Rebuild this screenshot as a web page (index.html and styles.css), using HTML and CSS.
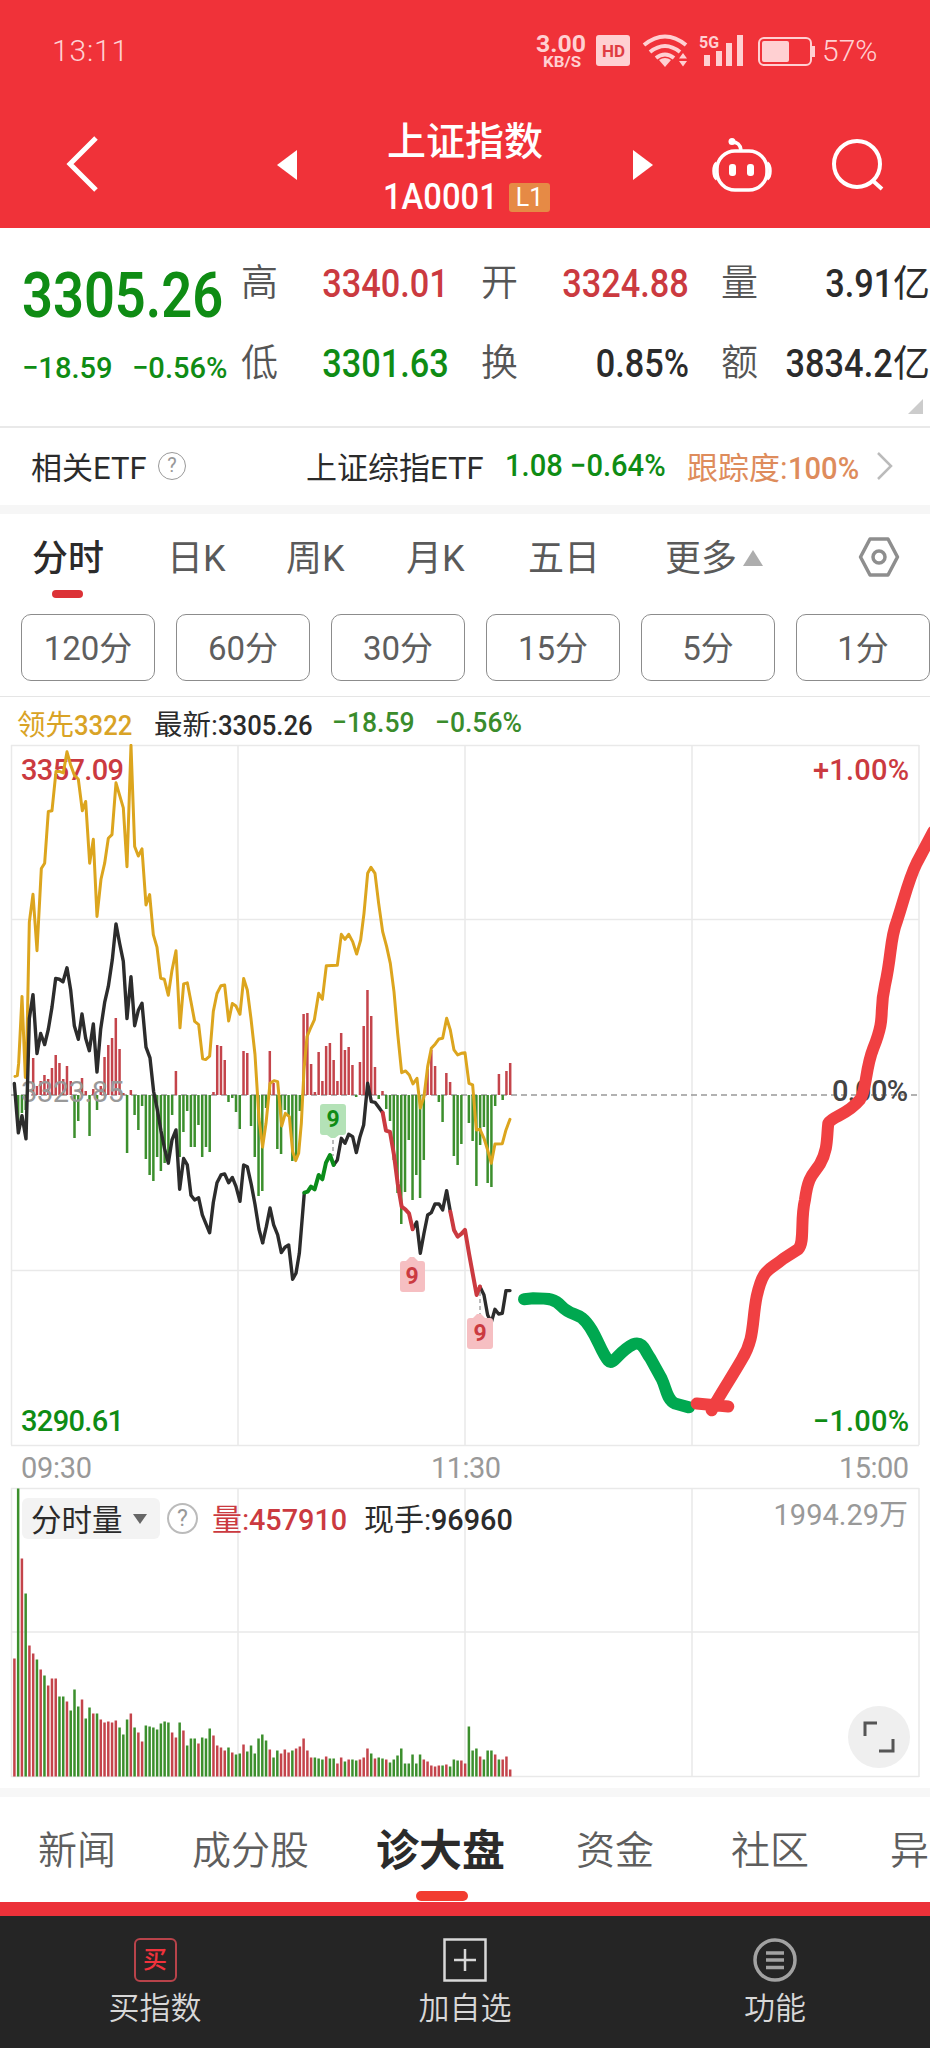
FILE: index.html
```
<!DOCTYPE html>
<html lang="zh-CN">
<head>
  <meta charset="UTF-8">
  <meta name="viewport" content="width=device-width, initial-scale=1.0">
  <title>上证指数</title>
  <link rel="stylesheet" href="styles.css">
</head>
<body>
  <div class="header">
    <div class="status">
      <span class="time">13:11</span>
      <svg class="status-icons" width="285" height="40" viewBox="535 30 285 40" fill="#ffd0d2">
        <text x="536" y="52" font-size="24" font-weight="700" textLength="50" lengthAdjust="spacingAndGlyphs">3.00</text>
        <text x="543" y="66.500" font-size="15" font-weight="700" textLength="38" lengthAdjust="spacingAndGlyphs">KB/S</text>
        <rect x="596" y="35" width="34" height="31" rx="3"/>
        <text x="602" y="56.5" font-size="17" font-weight="700" fill="#e03c42" textLength="23" lengthAdjust="spacingAndGlyphs">HD</text>
        <g fill="none" stroke="#ffd0d2" stroke-width="4">
          <path d="M644 45 Q665 28 686 45"/>
          <path d="M650 52 Q665 40 680 52"/>
          <path d="M656 58 Q665 51 674 58"/>
        </g>
        <path d="M659 60 Q665 56 671 60 L665 67Z"/>
        <path d="M679 58.500 L683 53 L687 58.500Z M679 61 L687 61 L683 66.500Z"/>
        <text x="699" y="48" font-size="17" font-weight="700" textLength="20" lengthAdjust="spacingAndGlyphs">5G</text>
        <rect x="704" y="55" width="6" height="11"/>
        <rect x="716" y="51" width="6" height="15"/>
        <rect x="726" y="43" width="6" height="23"/>
        <rect x="737" y="35" width="6" height="31"/>
        <rect x="759" y="38" width="52" height="27" rx="5" fill="none" stroke="#ffd0d2" stroke-width="2"/>
        <rect x="762" y="41" width="27" height="21" rx="2"/>
        <rect x="812" y="46" width="3" height="11"/>
      </svg>
      <span class="battery">57%</span>
    </div>
    <div class="nav">
      <svg class="back" width="34" height="58" viewBox="0 0 34 58" fill="none" stroke="#fff" stroke-width="5"><path d="M31 3 L5 29 L31 55"/></svg>
      <svg class="prev" width="20" height="30" viewBox="0 0 20 30" fill="#fff"><path d="M20 0 V30 L0 15Z"/></svg>
      <div class="title">
        <h1>上证指数</h1>
        <p><span class="code">1A0001</span><i class="level">L1</i></p>
      </div>
      <svg class="next" width="20" height="30" viewBox="0 0 20 30" fill="#fff"><path d="M0 0 V30 L20 15Z"/></svg>
      <svg class="robot" width="60" height="56" viewBox="0 0 60 56" fill="none" stroke="#fff" stroke-width="3.500">
        <rect x="5" y="14" width="50" height="39" rx="18"/>
        <path d="M5 26 Q2 28 2 34 Q2 40 5 42 M55 26 Q58 28 58 34 Q58 40 55 42"/>
        <path d="M20 5 Q28 5 29 13"/>
        <circle cx="20" cy="4.500" r="3.500" fill="#fff" stroke="none"/>
        <rect x="17" y="27" width="7" height="12" rx="3" fill="#fff" stroke="none"/>
        <rect x="35" y="27" width="7" height="12" rx="3" fill="#fff" stroke="none"/>
      </svg>
      <svg class="search" width="54" height="54" viewBox="0 0 54 54" fill="none" stroke="#fff" stroke-width="4">
        <circle cx="26" cy="26" r="23"/>
        <path d="M41 42 L51 51"/>
      </svg>
    </div>
  </div>

  <div class="quote">
    <div class="price">
      <strong class="green"><span class="num">3305.26</span></strong>
      <p class="green"><span class="num">−18.59</span><span class="num">−0.56%</span></p>
    </div>
    <dl class="stats">
      <dt>高</dt><dd class="red"><span class="num">3340.01</span></dd>
      <dt>开</dt><dd class="red"><span class="num">3324.88</span></dd>
      <dt>量</dt><dd><span class="num">3.91</span>亿</dd>
      <dt>低</dt><dd class="green"><span class="num">3301.63</span></dd>
      <dt>换</dt><dd><span class="num">0.85%</span></dd>
      <dt>额</dt><dd><span class="num">3834.2</span>亿</dd>
    </dl>
    <i class="corner"></i>
  </div>

  <div class="etf">
    <span>相关ETF</span>
    <i class="help">?</i>
    <span>上证综指ETF</span>
    <span class="green num">1.08</span>
    <span class="green num">−0.64%</span>
    <span class="orange">跟踪度:<b class="num">100%</b></span>
    <svg width="16" height="28" viewBox="0 0 16 28" fill="none" stroke="#bbb" stroke-width="2.500"><path d="M1 1 L14 14 L1 27"/></svg>
  </div>

  <div class="tabs">
    <span class="active">分时</span>
    <span>日K</span>
    <span>周K</span>
    <span>月K</span>
    <span>五日</span>
    <span>更多<i class="up"></i></span>
    <svg width="42" height="40" viewBox="0 0 42 40" fill="none" stroke="#8e8e8e" stroke-width="3.500">
      <path d="M12 2 H30 L39.500 20 L30 38 H12 L2.500 20Z" stroke-linejoin="round"/>
      <circle cx="21" cy="20" r="6"/>
    </svg>
  </div>
  <div class="periods">
    <span>120分</span><span>60分</span><span>30分</span><span>15分</span><span>5分</span><span>1分</span>
  </div>

  <div class="legend">
    <span class="yellow">领先<b class="num">3322</b></span>
    <span>最新:<b class="num">3305.26</b></span>
    <span class="green num">−18.59</span>
    <span class="green num">−0.56%</span>
  </div>

  <!-- 分时走势 + 分时量 -->
  <div class="chart">
    <svg width="930" height="1040" viewBox="0 744 930 1040">
      <g class="grid">
        <path d="M11 745.500 H919 M11 919.500 H919 M11 1270.500 H919 M11 1445.500 H919"/>
        <path d="M11.500 745 V1445 M238 745 V1445 M465 745 V1445 M692 745 V1445 M919 745 V1445"/>
        <path d="M11 1488.500 H919 M11 1632 H919 M11 1776.500 H919"/>
        <path d="M11.500 1488 V1777 M238 1488 V1777 M465 1488 V1777 M692 1488 V1777 M919 1488 V1777"/>
      </g>
      <path class="zero" d="M11 1095 H919"/>
      <g id="power"></g>
      <g id="volume"></g>

      <g class="axis">
        <text class="t-red" x="21" y="780" textLength="103">3357.09</text>
        <text class="t-red" x="813" y="780" textLength="96">+1.00%</text>
        <text class="t-gray" x="21" y="1102" font-size="30" textLength="103">3323.85</text>
        <text class="t-dark" x="832" y="1101" textLength="76">0.00%</text>
        <text class="t-green" x="21" y="1430.500" textLength="103">3290.61</text>
        <text class="t-green" x="813" y="1430.500" textLength="96">−1.00%</text>
        <text class="t-gray" x="21" y="1478" textLength="71">09:30</text>
        <text class="t-gray" x="431" y="1478" textLength="70">11:30</text>
        <text class="t-gray" x="839" y="1478" textLength="70">15:00</text>
      </g>

      <g class="line yellow-line">
        <polyline transform="translate(0 740) scale(.3333 .3571)" points="45,942 52,940 56,905 66,718 76,945 80,880 88,510 99,432 111,590 124,360 134,345 145,200 156,198 168,88 178,88 190,92 201,33 212,70 223,98 235,110 247,198 257,172 269,345 280,278 291,494 303,390 314,345 325,275 336,265 348,120 359,155 370,190 381,355 393,15 404,298 415,325 426,305 438,462 449,433 460,545 471,580 482,667 493,670 505,715 516,645 528,590 540,806 551,683 562,680 573,733 584,788 596,797 608,893 617,895 629,885 640,760 651,710 663,688 674,686 686,787 697,738 708,745 720,768 731,668 742,700 753,780 765,880 777,1060 788,1140"/>
        <polyline transform="translate(260 840) scale(.3333)" points="8,920 18,850 30,730 42,722 53,725 65,858 76,820 88,830 98,935 107,962 116,940 124,850 132,690 141,590 150,568 163,540 176,460 187,478 199,377 232,376 244,283 255,298 266,283 278,305 290,342 302,300 312,220 323,100 333,82 345,100 356,190 368,275 380,320 391,370 402,455 413,580 425,698 437,693 448,705 459,732 471,715 481,804 492,770 503,680 514,625 526,612 537,597 548,595 560,535 571,570 582,630 593,645 604,640 615,638 627,730 638,735 649,870 660,868 672,895 683,930 694,970 705,912 727,911 738,870 750,838"/>
      </g>
      <g class="line price-line">
        <polyline transform="translate(0 740) scale(.3333 .3571)" points="43,962 55,1100 66,1052 78,1117 88,780 99,713 111,878 122,822 134,853 145,810 156,748 167,668 178,670 189,677 201,638 212,700 223,800 235,838 246,767 257,835 268,870 280,795 291,930 302,810 314,735 325,690 337,615 348,515 359,570 370,620 381,780 393,663 404,800 415,757 426,737 438,860 450,890 461,985 472,1035 483,1095 494,1145 505,1185 516,1120 528,1092 539,1258 551,1172 562,1190 573,1275 584,1288 596,1282 607,1330 618,1355 629,1380 640,1295 651,1240 663,1218 674,1215 686,1240 697,1225 708,1250 720,1292 731,1190 742,1195 754,1245 765,1300 777,1370 788,1408"/>
        <g transform="translate(260 840) scale(.3333)">
          <polyline points="8,1208 19,1160 30,1104 41,1155 53,1185 64,1238 75,1222 86,1215 98,1318 108,1300 118,1240 133,1058"/>
          <polyline points="221,975 232,960 244,895 255,910 266,883 278,890 289,938 300,890 311,855 323,730 334,785 345,787 357,803 368,818"/>
          <polyline points="458,1168 470,1146 481,1240 492,1180 503,1125 514,1118 525,1092 537,1092 548,1110 560,1052 571,1115"/>
          <polyline points="660,1340 672,1365 683,1425 694,1447 705,1408 716,1422 727,1420 738,1352 750,1352"/>
          <polyline class="fall" points="133,1058 143,1055 153,1040 164,1048 176,1005 187,1018 198,968 210,945 221,975"/>
          <polyline class="rise" points="368,818 378,872 390,876 402,945 413,1030 425,1100 436,1108 447,1120 458,1168"/>
          <polyline class="rise" points="571,1115 582,1170 593,1190 604,1182 615,1170 627,1240 638,1300 650,1365 660,1340"/>
        </g>
      </g>

      <!-- 九转标记 -->
      <path d="M333 1140 V1156 M480 1292 V1314" stroke="#777" stroke-dasharray="4 3"/>
      <g class="nine">
        <path class="nine-green" d="M323 1104 H343 Q346 1104 346 1107 V1132 Q346 1135 343 1135 H339 L335 1138 H331 L327 1135 H323 Q320 1135 320 1132 V1107 Q320 1104 323 1104Z"/>
        <text class="t-green" x="333" y="1127">9</text>
        <path class="nine-red" d="M403 1261 H406 L410 1257 H414 L418 1261 H422 Q425 1261 425 1264 V1289 Q425 1292 422 1292 H403 Q400 1292 400 1289 V1264 Q400 1261 403 1261Z"/>
        <text class="t-red" x="412" y="1284">9</text>
        <path class="nine-red" d="M470 1318 H473 L477 1314 H481 L485 1318 H490 Q493 1318 493 1321 V1346 Q493 1349 490 1349 H470 Q467 1349 467 1346 V1321 Q467 1318 470 1318Z"/>
        <text class="t-red" x="480" y="1341">9</text>
      </g>

      <!-- 手绘走势 -->
      <g class="draw" transform="translate(500 800) scale(.3333 .4209)">
        <path stroke="#00a850" d="M72 1186 L100 1184 C150 1184 165 1186 185 1203 S225 1220 245 1230 C285 1255 300 1310 325 1332 C340 1345 355 1310 400 1293 C430 1285 435 1310 450 1325 L485 1375 C500 1400 500 1425 525 1434 L567 1443"/>
        <path stroke="#f04042" d="M590 1434 L685 1441 M635 1450 C650 1425 700 1365 725 1330 C765 1280 755 1240 770 1180 C790 1110 805 1120 850 1090 L895 1067 C915 1050 900 1000 915 950 C925 890 940 890 960 865 C985 830 980 800 985 768 C1000 750 1040 750 1080 712 C1100 690 1095 640 1120 590 C1160 510 1135 510 1155 440 C1175 370 1170 330 1190 290 C1215 230 1225 190 1250 150 L1300 75"/>
      </g>
    </svg>

    <div class="vol-bar">
      <span class="select">分时量<i class="down"></i></span>
      <i class="help">?</i>
      <span class="red">量:<b class="num">457910</b></span>
      <span>现手:<b class="num">96960</b></span>
      <span class="max">1994.29万</span>
    </div>
    <div class="expand">
      <svg width="32" height="32" viewBox="0 0 32 32" fill="none" stroke="#555" stroke-width="3"><path d="M2 15 V2 H14 M30 18 V30 H16"/></svg>
    </div>
  </div>

  <div class="sections">
    <span>新闻</span>
    <span>成分股</span>
    <span class="active">诊大盘</span>
    <span>资金</span>
    <span>社区</span>
    <span>异动</span>
  </div>

  <div class="footer">
    <div>
      <i class="buy">买</i>
      <span>买指数</span>
    </div>
    <div>
      <svg width="44" height="44" viewBox="0 0 44 44" fill="none" stroke="#d8d8d8" stroke-width="2.500"><path d="M1.500 1.500 H42.500 V42.500 H1.500Z M11 22 H33 M22 11 V33"/></svg>
      <span>加自选</span>
    </div>
    <div>
      <svg width="44" height="44" viewBox="0 0 44 44" fill="none" stroke="#a2a2a2" stroke-width="3.500"><circle cx="22" cy="22" r="20"/><path d="M13 15 H31 M13 22 H31 M13 29.500 H31"/></svg>
      <span>功能</span>
    </div>
  </div>
  <script src="chart.js"></script>
</body>
</html>
```

FILE: styles.css
```
*{
  margin:0;
  padding:0;
  box-sizing:border-box;
}
body{
  width:930px;
  height:2048px;
  overflow:hidden;
  background:#fff;
  color:#2b2b2b;
  font-family:Roboto,"Noto Sans CJK SC",sans-serif;
}
i{
  font-style:normal;
}
svg{
  display:block;
}
.num{
  display:inline-block;
  font-weight:500;
  transform:scaleX(.88);
  transform-origin:left;
}
.red{color:#cb3a40;}
.green{color:#0f8c14;}
.orange{color:#de8c5c;}
.yellow{color:#d9a326;}

/* 顶部 */
.header{
  height:228px;
  background:#f03239;
  color:#fff;
}
.status{
  height:102px;
  padding:30px 0 0 52px;
  display:flex;
  color:#ffd0d2;
  font-size:30px;
  font-weight:300;
  line-height:42px;
}
.time{
  width:483px;
  letter-spacing:.8px;
}
.battery{
  padding-left:2px;
}
.nav{
  display:grid;
  grid-template-columns:212px 91px 265px 79px 119px 60px;
  height:126px;
  padding:14px 0 0 65px;
  align-items:center;
}
.nav svg{
  margin-bottom:14px;
}
.nav .back{
  margin-bottom:17px;
}
.title{
  align-self:start;
  padding:2px 0 0 15px;
}
.title h1{
  font-size:39px;
  font-weight:500;
  line-height:48px;
  padding-left:4px;
}
.title p{
  display:flex;
  align-items:center;
  height:62px;
}
.code{
  width:126px;
  font-size:36px;
  font-weight:500;
  transform:scaleX(.91);
  transform-origin:left;
}
.level{
  width:41px;
  height:29px;
  background:#e68a45;
  border-radius:3px;
  font-size:25px;
  line-height:29px;
  text-align:center;
}

/* 行情 */
.quote{
  display:flex;
  position:relative;
  height:200px;
  border-bottom:2px solid #e9e9e9;
}
.price{
  width:241px;
  padding:32px 0 0 22px;
}
.price strong{
  display:block;
  font-size:63px;
  line-height:72px;
}
.price strong .num{
  font-weight:600;
  transform:scaleX(.86);
}
.price p{
  display:flex;
  gap:17px;
  font-size:30px;
  line-height:36px;
  padding-top:18px;
}
.price p .num{
  transform:scaleX(.97);
}
.stats{
  display:grid;
  grid-template-columns:44px 164px 76px 164px 77px 164px;
  grid-template-rows:80px 80px;
  width:689px;
  padding-top:16px;
  line-height:80px;
}
.stats dt{
  font-size:37px;
  font-weight:350;
  color:#555;
}
.stats dt:nth-of-type(3n+2),.stats dt:nth-of-type(3n){
  padding-left:32px;
}
.stats dd{
  font-size:39px;
  font-weight:400;
  white-space:nowrap;
  text-align:right;
}
.stats dd .num{
  transform-origin:right;
}
.stats dd:nth-of-type(3n){
  font-size:37px;
}
.stats dd:nth-of-type(3n) .num{
  font-size:39px;
}
.corner{
  position:absolute;
  right:7px;
  bottom:12px;
  border-left:15px solid transparent;
  border-bottom:15px solid #ccc;
}
.etf{
  display:grid;
  grid-template-columns:127px 148px 199px 65px 117px 190px 20px;
  align-items:center;
  height:86px;
  padding:0 0 2px 31px;
  border-bottom:9px solid #f6f6f6;
  font-size:31px;
  white-space:nowrap;
}
.etf .num{
  transform:scaleX(.94);
}
.help{
  display:block;
  width:28px;
  height:28px;
  border:1.5px solid #999;
  border-radius:50%;
  color:#999;
  font-size:20px;
  line-height:25px;
  text-align:center;
}

/* 周期 */
.tabs{
  display:grid;
  grid-template-columns:135px 119px 120px 122px 137px 193px 42px;
  align-items:center;
  height:99px;
  padding:0 0 14px 32px;
  color:#5a5a5a;
  font-size:36px;
}
.tabs span{
  margin-top:-3px;
}
.tabs .active{
  position:relative;
  color:#2b2b2b;
  font-weight:500;
}
.tabs .active:after{
  content:"";
  position:absolute;
  left:20px;
  top:61px;
  width:31px;
  height:8px;
  border-radius:4px;
  background:#dc3237;
}
.up{
  display:inline-block;
  margin-left:6px;
  vertical-align:5px;
  border:10px solid transparent;
  border-top:0;
  border-bottom:16px solid #adadad;
}
.periods{
  display:flex;
  gap:21px;
  height:84px;
  padding-left:21px;
  border-bottom:1px solid #e5e5e5;
}
.periods span{
  flex:0 0 134px;
  height:67px;
  margin-top:1px;
  border:1px solid #8c8c8c;
  border-radius:10px;
  color:#5e5e5e;
  font-size:33px;
  line-height:67px;
  text-align:center;
}
.legend{
  display:grid;
  grid-template-columns:137px 178px 103px 100px;
  align-items:center;
  height:47px;
  padding:3px 0 0 17px;
  font-size:28.5px;
  white-space:nowrap;
}
.legend .num{
  transform:scaleX(.9);
}
.legend .green{
  color:#3a8c2c;
  transform:scaleX(.93);
}

/* 走势图 */
.chart{
  position:relative;
  height:1044px;
}
.grid path{
  fill:none;
  stroke:#e9e9e9;
  stroke-width:1.500;
}
.zero{
  stroke:#999;
  stroke-width:1.500;
  stroke-dasharray:6 4;
}
.axis text{
  font-size:29px;
  font-weight:500;
}
.axis .t-gray{
  font-weight:400;
}
.t-red{fill:#cb3a40;}
.t-green{fill:#0f8c14;}
.t-gray{fill:#999;}
.t-dark{fill:#444;}
.line polyline{
  fill:none;
  stroke-width:3;
  stroke-linejoin:round;
  stroke-linecap:round;
  vector-effect:non-scaling-stroke;
}
.yellow-line polyline{stroke:#dca51e;}
.price-line polyline{
  stroke:#2c2c2c;
  stroke-width:3.400;
}
.price-line .fall{
  stroke:#0b8c1a;
  stroke-width:4;
}
.price-line .rise{
  stroke:#cb3a40;
  stroke-width:4;
}
.nine text{
  font-size:23px;
  font-weight:700;
  text-anchor:middle;
}
.nine-green{fill:#b4e2b7;}
.nine-red{fill:#f6bfc2;}
.draw path{
  fill:none;
  stroke-width:12;
  stroke-linecap:round;
  stroke-linejoin:round;
  vector-effect:non-scaling-stroke;
}
.vol-bar{
  position:absolute;
  left:22px;
  top:753px;
  width:886px;
  display:grid;
  grid-template-columns:145px 45px 152px 170px 1fr;
  align-items:center;
  font-size:30px;
  white-space:nowrap;
}
.vol-bar .num{
  transform:scaleX(.96);
}
.vol-bar>span{
  margin-top:-2px;
}
.vol-bar .help{
  width:31px;
  height:31px;
  border-width:2px;
  border-color:#bbb;
  font-size:23px;
  line-height:27px;
}
.vol-bar .select{
  width:138px;
  height:41px;
  margin-top:0;
  padding-left:9px;
  border-radius:6px;
  background:#f3f3f3;
  font-size:30.5px;
  line-height:45px;
}
.down{
  display:inline-block;
  margin-left:10px;
  vertical-align:7px;
  border:7.5px solid transparent;
  border-bottom:0;
  border-top:10px solid #666;
}
.vol-bar .max{
  text-align:right;
  color:#999;
  font-size:29px;
  margin-top:-12px;
}
.expand{
  position:absolute;
  left:848px;
  top:962px;
  width:62px;
  height:62px;
  padding:15px;
  border-radius:50%;
  background:#efefef;
}

/* 底部 */
.sections{
  display:grid;
  grid-template-columns:154px 184px 200px 155px 159px 80px;
  align-items:center;
  height:128px;
  padding:0 0 5px 38px;
  border-top:9px solid #f7f7f7;
  border-bottom:14px solid #ec3139;
  color:#5e5e5e;
  font-size:39px;
  font-weight:350;
  white-space:nowrap;
}
.sections .active{
  position:relative;
  color:#2b2b2b;
  font-size:43px;
  font-weight:700;
}
.sections .active:after{
  content:"";
  position:absolute;
  left:40px;
  bottom:-23px;
  width:52px;
  height:10px;
  border-radius:5px;
  background:#f23c30;
}
.footer{
  display:grid;
  grid-template-columns:1fr 1fr 1fr;
  height:133px;
  padding-top:22px;
  background:#252525;
  color:#d8d8d8;
  font-size:31px;
  font-weight:350;
}
.footer div{
  display:flex;
  flex-direction:column;
  align-items:center;
  line-height:46px;
  gap:4px;
}
.buy{
  width:43px;
  height:44px;
  border:2.5px solid #b8434a;
  border-radius:6px;
  color:#f0323c;
  font-size:24px;
  font-weight:500;
  line-height:40px;
  text-align:center;
}
```

FILE: chart.js
```
var NS = "http://www.w3.org/2000/svg"
var START = 14.4
var STEP = 3.756

function bar(box, i, y, h, color){
  var r = document.createElementNS(NS, "rect")
  r.setAttribute("x", (START + STEP * i - 1.25).toFixed(2))
  r.setAttribute("y", y)
  r.setAttribute("width", 2.5)
  r.setAttribute("height", h)
  r.setAttribute("fill", color)
  box.appendChild(r)
}

// 红绿柱, 0轴在1095
var power = [0,-25,-18,-15,0,37,9,14,20,16,27,40,32,16,29,14,-43,-26,17,4,-41,6,-15,9,38,50,57,77,46,2,-58,5,
  -20,-35,-11,-64,-80,-86,-62,-76,-68,-66,-20,24,-62,-37,-16,-52,-52,-30,-62,-52,-57,3,50,49,35,-7,-3,-17,-34,
  44,42,-31,-62,-101,-96,-13,44,12,-54,-59,-15,-20,-66,-61,-16,81,82,31,3,43,14,49,52,35,14,62,45,48,30,-2,33,
  69,105,79,28,-4,4,-14,-26,-65,-98,-129,-97,-45,-105,-80,-103,-65,26,45,29,-7,-27,22,13,-61,-70,-49,0,-28,-46,
  -91,-50,-32,-88,-92,-11,21,-5,24,32]
for(var i = 0;i < power.length;i++){
  var p = power[i]
  bar(document.getElementById("power"), i, p > 0 ? 1095 - p : 1095, Math.abs(p), p > 0 ? "#c4444b" : "#3c8f2d")
}

// 成交量
var volume = [118,288,218,183,131,123,117,107,101,91,98,98,80,80,75,66,87,70,77,58,69,63,63,57,54,55,54,56,49,42,
  57,63,49,44,35,51,50,49,47,53,55,54,44,39,54,46,31,38,38,33,39,38,48,41,31,29,26,29,24,22,23,32,25,31,23,38,42,
  36,27,19,26,23,27,24,26,28,30,38,26,19,19,18,17,20,18,18,13,19,15,17,17,16,17,19,28,23,18,19,18,17,14,17,21,28,
  13,13,22,13,22,17,15,11,10,11,11,12,10,17,16,16,13,50,26,28,20,17,26,26,22,17,17,20,7]
var colors = "rgrgrrgrgrrrggrggg" + "rggrgrrrrrgggrgrrgggggggrrgrgggrgggrrrrgrggrgggggg" +
  "rggrrrgrrrrrgggrggrrgrggrrrgrggrggggggggg" + "rrrrrgrgggrrgggrgggrgrrr"
for(var i = 0;i < volume.length;i++){
  bar(document.getElementById("volume"), i, 1776.5 - volume[i], volume[i], colors[i] == "r" ? "#c4444b" : "#3c8f2d")
}
```
